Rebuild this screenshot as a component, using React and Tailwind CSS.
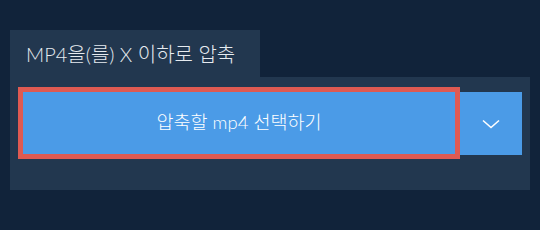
export default function App() {
  return (
    <div className="w-[540px] h-[230px] bg-[#11233a] pt-[30px] pl-[10px] font-['Lato','Noto_Sans_CJK_KR',sans-serif]">
      <div className="inline-flex items-center h-[47px] w-[250px] bg-[#22374f] pl-[16px] text-[20px] font-light text-[#e6ebf0]">
        MP4을(를) X 이하로 압축
      </div>
      <div className="w-[520px] h-[113px] bg-[#22374f] pl-[13px] pt-[15px] flex items-start">
        <button className="w-[432px] h-[62px] bg-[#4b9be7] outline-[5px] outline-solid outline-[#df5a52] text-white text-[18.5px] font-light flex items-center justify-center">
          압축할 mp4 선택하기
        </button>
        <button className="ml-[5px] w-[62px] h-[63px] bg-[#4b9be7] flex items-center justify-center">
          <svg width="18" height="10" viewBox="0 0 18 10" fill="none">
            <path d="M1 1.5 L9 8.5 L17 1.5" stroke="white" strokeWidth="1.6" />
          </svg>
        </button>
      </div>
    </div>
  );
}
